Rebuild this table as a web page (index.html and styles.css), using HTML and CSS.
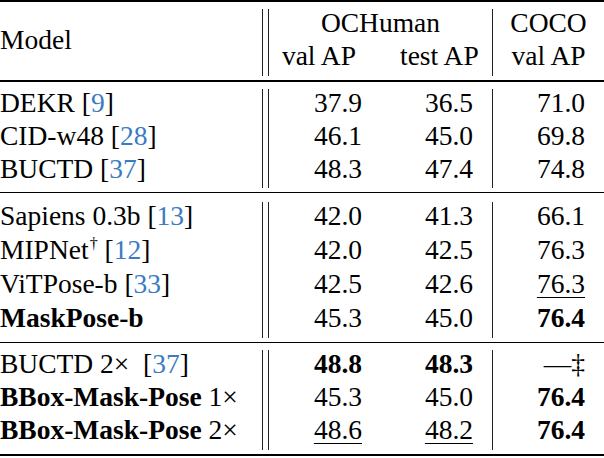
FILE: index.html
```html
<!DOCTYPE html>
<html>
<head>
<meta charset="utf-8">
<link rel="stylesheet" href="styles.css">
</head>
<body>
<div class="tbl">
  <div class="sec head">
    <div class="cell model-h">Model</div>
    <div class="dbl"></div>
    <div class="cell och">OCHuman</div>
    <div class="sgl"></div>
    <div class="cell coco">COCO</div>
    <div class="cell h1">val AP</div>
    <div class="cell h2">test AP</div>
    <div class="cell h3">val AP</div>
  </div>

  <div class="sec rows3 mid">
    <div class="dbl"></div>
    <div class="sgl"></div>
    <div class="cell m">DEKR [<span class="cite">9</span>]</div>
    <div class="cell a">37.9</div>
    <div class="cell b">36.5</div>
    <div class="cell c">71.0</div>
    <div class="cell m">CID-w48 [<span class="cite">28</span>]</div>
    <div class="cell a">46.1</div>
    <div class="cell b">45.0</div>
    <div class="cell c">69.8</div>
    <div class="cell m">BUCTD [<span class="cite">37</span>]</div>
    <div class="cell a">48.3</div>
    <div class="cell b">47.4</div>
    <div class="cell c">74.8</div>
  </div>

  <div class="sec rows4 mid g2">
    <div class="dbl"></div>
    <div class="sgl"></div>
    <div class="cell m">Sapiens 0.3b [<span class="cite">13</span>]</div>
    <div class="cell a">42.0</div>
    <div class="cell b">41.3</div>
    <div class="cell c">66.1</div>
    <div class="cell m">MIPNet<span class="sup">†</span> [<span class="cite">12</span>]</div>
    <div class="cell a">42.0</div>
    <div class="cell b">42.5</div>
    <div class="cell c">76.3</div>
    <div class="cell m">ViTPose-b [<span class="cite">33</span>]</div>
    <div class="cell a">42.5</div>
    <div class="cell b">42.6</div>
    <div class="cell c"><span class="ul">76.3</span></div>
    <div class="cell m"><b>MaskPose-b</b></div>
    <div class="cell a">45.3</div>
    <div class="cell b">45.0</div>
    <div class="cell c"><b>76.4</b></div>
  </div>

  <div class="sec rows3">
    <div class="dbl"></div>
    <div class="sgl"></div>
    <div class="cell m">BUCTD 2×&nbsp; [<span class="cite">37</span>]</div>
    <div class="cell a"><b>48.8</b></div>
    <div class="cell b"><b>48.3</b></div>
    <div class="cell c">—‡</div>
    <div class="cell m"><b>BBox-Mask-Pose</b> 1×</div>
    <div class="cell a">45.3</div>
    <div class="cell b">45.0</div>
    <div class="cell c"><b>76.4</b></div>
    <div class="cell m"><b>BBox-Mask-Pose</b> 2×</div>
    <div class="cell a"><span class="ul">48.6</span></div>
    <div class="cell b"><span class="ul">48.2</span></div>
    <div class="cell c"><b>76.4</b></div>
  </div>
</div>
</body>
</html>
```

FILE: styles.css
```css
body {
  margin: 0;
  background: #fff;
}

.tbl {
  width: 604px;
  font-family: "Liberation Serif", "Times New Roman", serif;
  font-size: 27.5px;
  color: #000;
  border-top: 2px solid #000;
  border-bottom: 2px solid #000;
}

.sec {
  display: grid;
  grid-template-columns: 262px 7px 131px 92px 1px 111px;
  padding: 7px 0 4px;
}

.head {
  grid-template-rows: auto auto;
  border-bottom: 2px solid #000;
}

.rows3 {
  grid-template-rows: repeat(3, auto);
}

.rows4 {
  grid-template-rows: repeat(4, auto);
}

.mid {
  border-bottom: 1px solid #000;
}

.cell {
  line-height: 28px;
  padding-bottom: 5.3px;
  white-space: nowrap;
}

.g2 {
  padding-top: 9px;
}

.g2 .cell {
  padding-bottom: 5.8px;
}

.dbl {
  grid-column: 2;
  grid-row: 1 / -1;
  border-left: 1px solid #222;
  border-right: 1px solid #222;
}

.sgl {
  grid-column: 5;
  grid-row: 1 / -1;
  background: #222;
}

.model-h {
  grid-column: 1;
  grid-row: 1 / 3;
  align-self: center;
}

.och {
  grid-column: 3 / 5;
  grid-row: 1;
  text-align: center;
}

.coco {
  grid-column: 6;
  grid-row: 1;
  text-align: center;
}

.h1 {
  grid-column: 3;
  grid-row: 2;
  text-align: right;
  padding-right: 44px;
}

.h2 {
  grid-column: 4;
  grid-row: 2;
  text-align: right;
  padding-right: 17px;
}

.h3 {
  grid-column: 6;
  grid-row: 2;
  text-align: center;
}

.m {
  grid-column: 1;
}

.a {
  grid-column: 3;
  text-align: right;
  padding-right: 38px;
}

.b {
  grid-column: 4;
  text-align: right;
  padding-right: 19px;
}

.c {
  grid-column: 6;
  text-align: right;
  padding-right: 19px;
}

.cite {
  color: #3a7cc2;
}

.sup {
  font-size: 16px;
  vertical-align: 10px;
  line-height: 0;
  margin-left: 1px;
}

.ul {
  text-decoration: underline;
  text-decoration-thickness: 1px;
  text-underline-offset: 4px;
}

b {
  font-weight: bold;
}
```
